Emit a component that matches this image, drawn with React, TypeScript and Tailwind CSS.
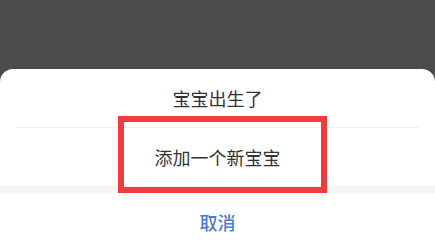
export default function App() {
  const font = { fontFamily: '"Noto Sans CJK SC", "Noto Sans", sans-serif' };

  return (
    <div className="relative flex h-[252px] w-[435px] flex-col overflow-hidden bg-[#4b4b4b]" style={font}>
      <div className="flex-1" />

      {/* Action sheet */}
      <div className="flex flex-col rounded-t-[13px] bg-white">
        <div className="flex h-[58px] items-center justify-center text-[18px] text-[#333333]">宝宝出生了</div>
        <div className="mx-4 h-px bg-[#f0f0f0]" />
        <div className="flex h-[58px] items-center justify-center text-[18px] text-[#333333]">添加一个新宝宝</div>
        <div className="h-[7px] bg-[#f5f5f5]" />
        <div className="flex h-[59px] items-center justify-center text-[18px] font-medium text-[#4a7bcd]">取消</div>
      </div>

      {/* Annotation box */}
      <div className="absolute left-[118px] top-[116px] h-[77px] w-[209px] border-[6px] border-[#f03c3c]" />
    </div>
  );
}
